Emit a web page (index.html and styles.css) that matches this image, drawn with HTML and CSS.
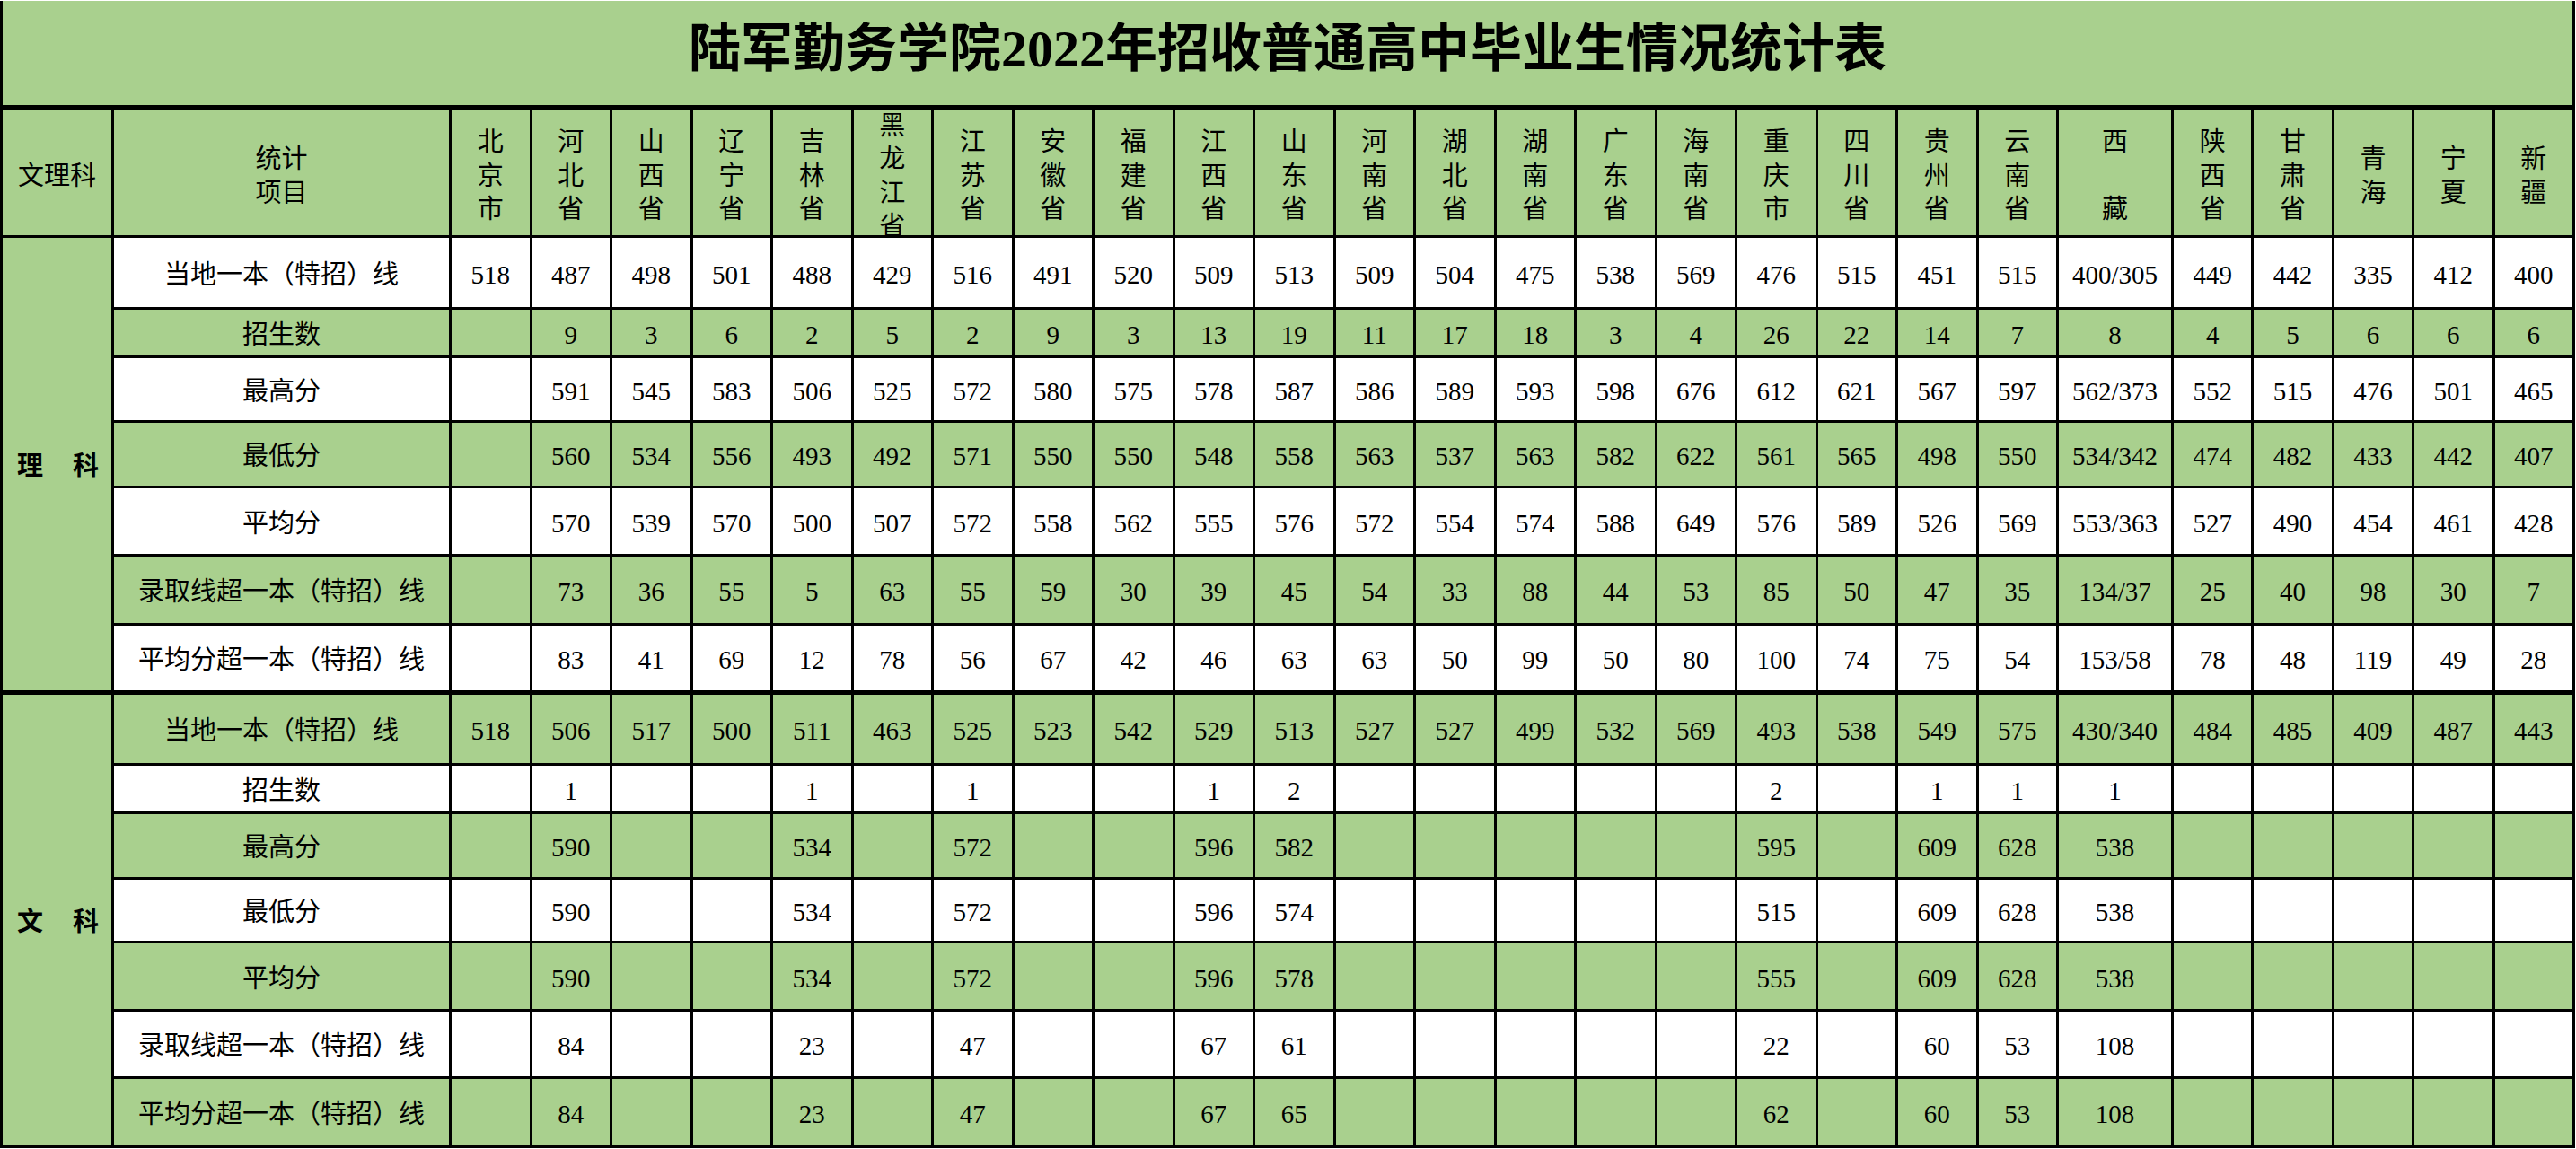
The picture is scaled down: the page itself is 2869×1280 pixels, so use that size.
FILE: index.html
```html
<!DOCTYPE html>
<html lang="zh-CN">
<head>
<meta charset="utf-8">
<title>陆军勤务学院2022年招收普通高中毕业生情况统计表</title>
<link rel="stylesheet" href="styles.css">
</head>
<body>
<table class="sheet">
  <colgroup>
    <col class="c1"><col class="c2">
    <col class="cp"><col class="cp"><col class="cp"><col class="cp"><col class="cp"><col class="cp"><col class="cp"><col class="cp"><col class="cp"><col class="cp">
    <col class="cp"><col class="cp"><col class="cp"><col class="cp"><col class="cp"><col class="cp"><col class="cp"><col class="cp"><col class="cp"><col class="cp">
    <col class="ct">
    <col class="cq"><col class="cq"><col class="cq"><col class="cq"><col class="cq">
  </colgroup>
  <tbody>
    <tr class="h-title g">
      <td colspan="28" class="title">陆军勤务学院2022年招收普通高中毕业生情况统计表</td>
    </tr>
    <tr class="h-head g">
      <td><div class="hd">文理科</div></td>
      <td><div class="hd">统计<br>项目</div></td>
      <td><div class="hd"><span class="vt">北京市</span></div></td>
      <td><div class="hd"><span class="vt">河北省</span></div></td>
      <td><div class="hd"><span class="vt">山西省</span></div></td>
      <td><div class="hd"><span class="vt">辽宁省</span></div></td>
      <td><div class="hd"><span class="vt">吉林省</span></div></td>
      <td><div class="hd"><span class="vt">黑龙江省</span></div></td>
      <td><div class="hd"><span class="vt">江苏省</span></div></td>
      <td><div class="hd"><span class="vt">安徽省</span></div></td>
      <td><div class="hd"><span class="vt">福建省</span></div></td>
      <td><div class="hd"><span class="vt">江西省</span></div></td>
      <td><div class="hd"><span class="vt">山东省</span></div></td>
      <td><div class="hd"><span class="vt">河南省</span></div></td>
      <td><div class="hd"><span class="vt">湖北省</span></div></td>
      <td><div class="hd"><span class="vt">湖南省</span></div></td>
      <td><div class="hd"><span class="vt">广东省</span></div></td>
      <td><div class="hd"><span class="vt">海南省</span></div></td>
      <td><div class="hd"><span class="vt">重庆市</span></div></td>
      <td><div class="hd"><span class="vt">四川省</span></div></td>
      <td><div class="hd"><span class="vt">贵州省</span></div></td>
      <td><div class="hd"><span class="vt">云南省</span></div></td>
      <td><div class="hd"><span class="vt">西<br><br>藏</span></div></td>
      <td><div class="hd"><span class="vt">陕西省</span></div></td>
      <td><div class="hd"><span class="vt">甘肃省</span></div></td>
      <td><div class="hd"><span class="vt">青海</span></div></td>
      <td><div class="hd"><span class="vt">宁夏</span></div></td>
      <td><div class="hd"><span class="vt">新疆</span></div></td>
    </tr>

    <!-- 理科 -->
    <tr class="h80">
      <td rowspan="7" class="side side-s"><div class="side-tx"><b>理</b><b>科</b></div></td>
      <td>当地一本（特招）线</td>
      <td>518</td><td>487</td><td>498</td><td>501</td><td>488</td><td>429</td><td>516</td><td>491</td><td>520</td><td>509</td><td>513</td><td>509</td><td>504</td><td>475</td><td>538</td><td>569</td><td>476</td><td>515</td><td>451</td><td>515</td><td>400/305</td><td>449</td><td>442</td><td>335</td><td>412</td><td>400</td>
    </tr>
    <tr class="h54 g">
      <td>招生数</td>
      <td></td><td>9</td><td>3</td><td>6</td><td>2</td><td>5</td><td>2</td><td>9</td><td>3</td><td>13</td><td>19</td><td>11</td><td>17</td><td>18</td><td>3</td><td>4</td><td>26</td><td>22</td><td>14</td><td>7</td><td>8</td><td>4</td><td>5</td><td>6</td><td>6</td><td>6</td>
    </tr>
    <tr class="h72">
      <td>最高分</td>
      <td></td><td>591</td><td>545</td><td>583</td><td>506</td><td>525</td><td>572</td><td>580</td><td>575</td><td>578</td><td>587</td><td>586</td><td>589</td><td>593</td><td>598</td><td>676</td><td>612</td><td>621</td><td>567</td><td>597</td><td>562/373</td><td>552</td><td>515</td><td>476</td><td>501</td><td>465</td>
    </tr>
    <tr class="h73 g">
      <td>最低分</td>
      <td></td><td>560</td><td>534</td><td>556</td><td>493</td><td>492</td><td>571</td><td>550</td><td>550</td><td>548</td><td>558</td><td>563</td><td>537</td><td>563</td><td>582</td><td>622</td><td>561</td><td>565</td><td>498</td><td>550</td><td>534/342</td><td>474</td><td>482</td><td>433</td><td>442</td><td>407</td>
    </tr>
    <tr class="h76">
      <td>平均分</td>
      <td></td><td>570</td><td>539</td><td>570</td><td>500</td><td>507</td><td>572</td><td>558</td><td>562</td><td>555</td><td>576</td><td>572</td><td>554</td><td>574</td><td>588</td><td>649</td><td>576</td><td>589</td><td>526</td><td>569</td><td>553/363</td><td>527</td><td>490</td><td>454</td><td>461</td><td>428</td>
    </tr>
    <tr class="h77 g">
      <td>录取线超一本（特招）线</td>
      <td></td><td>73</td><td>36</td><td>55</td><td>5</td><td>63</td><td>55</td><td>59</td><td>30</td><td>39</td><td>45</td><td>54</td><td>33</td><td>88</td><td>44</td><td>53</td><td>85</td><td>50</td><td>47</td><td>35</td><td>134/37</td><td>25</td><td>40</td><td>98</td><td>30</td><td>7</td>
    </tr>
    <tr class="h76">
      <td>平均分超一本（特招）线</td>
      <td></td><td>83</td><td>41</td><td>69</td><td>12</td><td>78</td><td>56</td><td>67</td><td>42</td><td>46</td><td>63</td><td>63</td><td>50</td><td>99</td><td>50</td><td>80</td><td>100</td><td>74</td><td>75</td><td>54</td><td>153/58</td><td>78</td><td>48</td><td>119</td><td>49</td><td>28</td>
    </tr>

    <!-- 文科 -->
    <tr class="h80 g sep">
      <td rowspan="7" class="side"><div class="side-tx"><b>文</b><b>科</b></div></td>
      <td>当地一本（特招）线</td>
      <td>518</td><td>506</td><td>517</td><td>500</td><td>511</td><td>463</td><td>525</td><td>523</td><td>542</td><td>529</td><td>513</td><td>527</td><td>527</td><td>499</td><td>532</td><td>569</td><td>493</td><td>538</td><td>549</td><td>575</td><td>430/340</td><td>484</td><td>485</td><td>409</td><td>487</td><td>443</td>
    </tr>
    <tr class="h54">
      <td>招生数</td>
      <td></td><td>1</td><td></td><td></td><td>1</td><td></td><td>1</td><td></td><td></td><td>1</td><td>2</td><td></td><td></td><td></td><td></td><td></td><td>2</td><td></td><td>1</td><td>1</td><td>1</td><td></td><td></td><td></td><td></td><td></td>
    </tr>
    <tr class="h73 g">
      <td>最高分</td>
      <td></td><td>590</td><td></td><td></td><td>534</td><td></td><td>572</td><td></td><td></td><td>596</td><td>582</td><td></td><td></td><td></td><td></td><td></td><td>595</td><td></td><td>609</td><td>628</td><td>538</td><td></td><td></td><td></td><td></td><td></td>
    </tr>
    <tr class="h71">
      <td>最低分</td>
      <td></td><td>590</td><td></td><td></td><td>534</td><td></td><td>572</td><td></td><td></td><td>596</td><td>574</td><td></td><td></td><td></td><td></td><td></td><td>515</td><td></td><td>609</td><td>628</td><td>538</td><td></td><td></td><td></td><td></td><td></td>
    </tr>
    <tr class="h76 g">
      <td>平均分</td>
      <td></td><td>590</td><td></td><td></td><td>534</td><td></td><td>572</td><td></td><td></td><td>596</td><td>578</td><td></td><td></td><td></td><td></td><td></td><td>555</td><td></td><td>609</td><td>628</td><td>538</td><td></td><td></td><td></td><td></td><td></td>
    </tr>
    <tr class="h75">
      <td>录取线超一本（特招）线</td>
      <td></td><td>84</td><td></td><td></td><td>23</td><td></td><td>47</td><td></td><td></td><td>67</td><td>61</td><td></td><td></td><td></td><td></td><td></td><td>22</td><td></td><td>60</td><td>53</td><td>108</td><td></td><td></td><td></td><td></td><td></td>
    </tr>
    <tr class="h77 g">
      <td>平均分超一本（特招）线</td>
      <td></td><td>84</td><td></td><td></td><td>23</td><td></td><td>47</td><td></td><td></td><td>67</td><td>65</td><td></td><td></td><td></td><td></td><td></td><td>62</td><td></td><td>60</td><td>53</td><td>108</td><td></td><td></td><td></td><td></td><td></td>
    </tr>
  </tbody>
</table>
</body>
</html>
```

FILE: styles.css
```css
html, body {
  margin: 0;
  padding: 0;
  background: #ffffff;
}

body {
  padding-top: 1px;
}

.sheet {
  border-collapse: collapse;
  table-layout: fixed;
  width: 2865px;
  font-family: "Liberation Serif", "Noto Sans CJK SC", serif;
  font-size: 29px;
  color: #000;
}

.c1 { width: 124px; }
.c2 { width: 376px; }
.cp { width: 89.5px; }
.ct { width: 128px; }
.cq { width: 89.4px; }

.sheet td {
  border: 3px solid #000;
  padding: 0;
  text-align: center;
  vertical-align: middle;
  background: #ffffff;
  white-space: nowrap;
  line-height: 1;
  padding-top: 6px;
}

.sheet .g td {
  background: #a9d08e;
}

.sheet td.side {
  background: #a9d08e;
}

.sheet td.title {
  border-top: 0;
  border-bottom-width: 5px;
  font-size: 58px;
  font-weight: 700;
  padding-top: 0;
  padding-bottom: 8px;
}

.sheet .sep td,
.sheet td.side-s {
  border-top-width: 5px;
}

.sheet td.side-s {
  border-top-width: 3px;
  border-bottom-width: 5px;
}

.sheet .sep td {
  border-top-width: 5px;
}

.h-title { height: 118px; }
.h-head { height: 144px; }
.h80 { height: 80px; }
.h54 { height: 54px; }
.h71 { height: 71px; }
.h72 { height: 72px; }
.h73 { height: 73px; }
.h75 { height: 75px; }
.h76 { height: 76px; }
.h77 { height: 77px; }

.h-head td {
  padding-top: 0;
}

.hd {
  box-sizing: border-box;
  height: 140px;
  padding-top: 10px;
  overflow: hidden;
  display: flex;
  align-items: center;
  justify-content: center;
  line-height: 37.5px;
  white-space: normal;
}

.vt {
  display: inline-block;
  width: 1em;
  line-height: 37.5px;
  word-break: break-all;
}

.side-tx {
  display: flex;
  justify-content: space-between;
  padding: 0 14px 0 16px;
}

.side-tx b {
  font-weight: 700;
}
```
